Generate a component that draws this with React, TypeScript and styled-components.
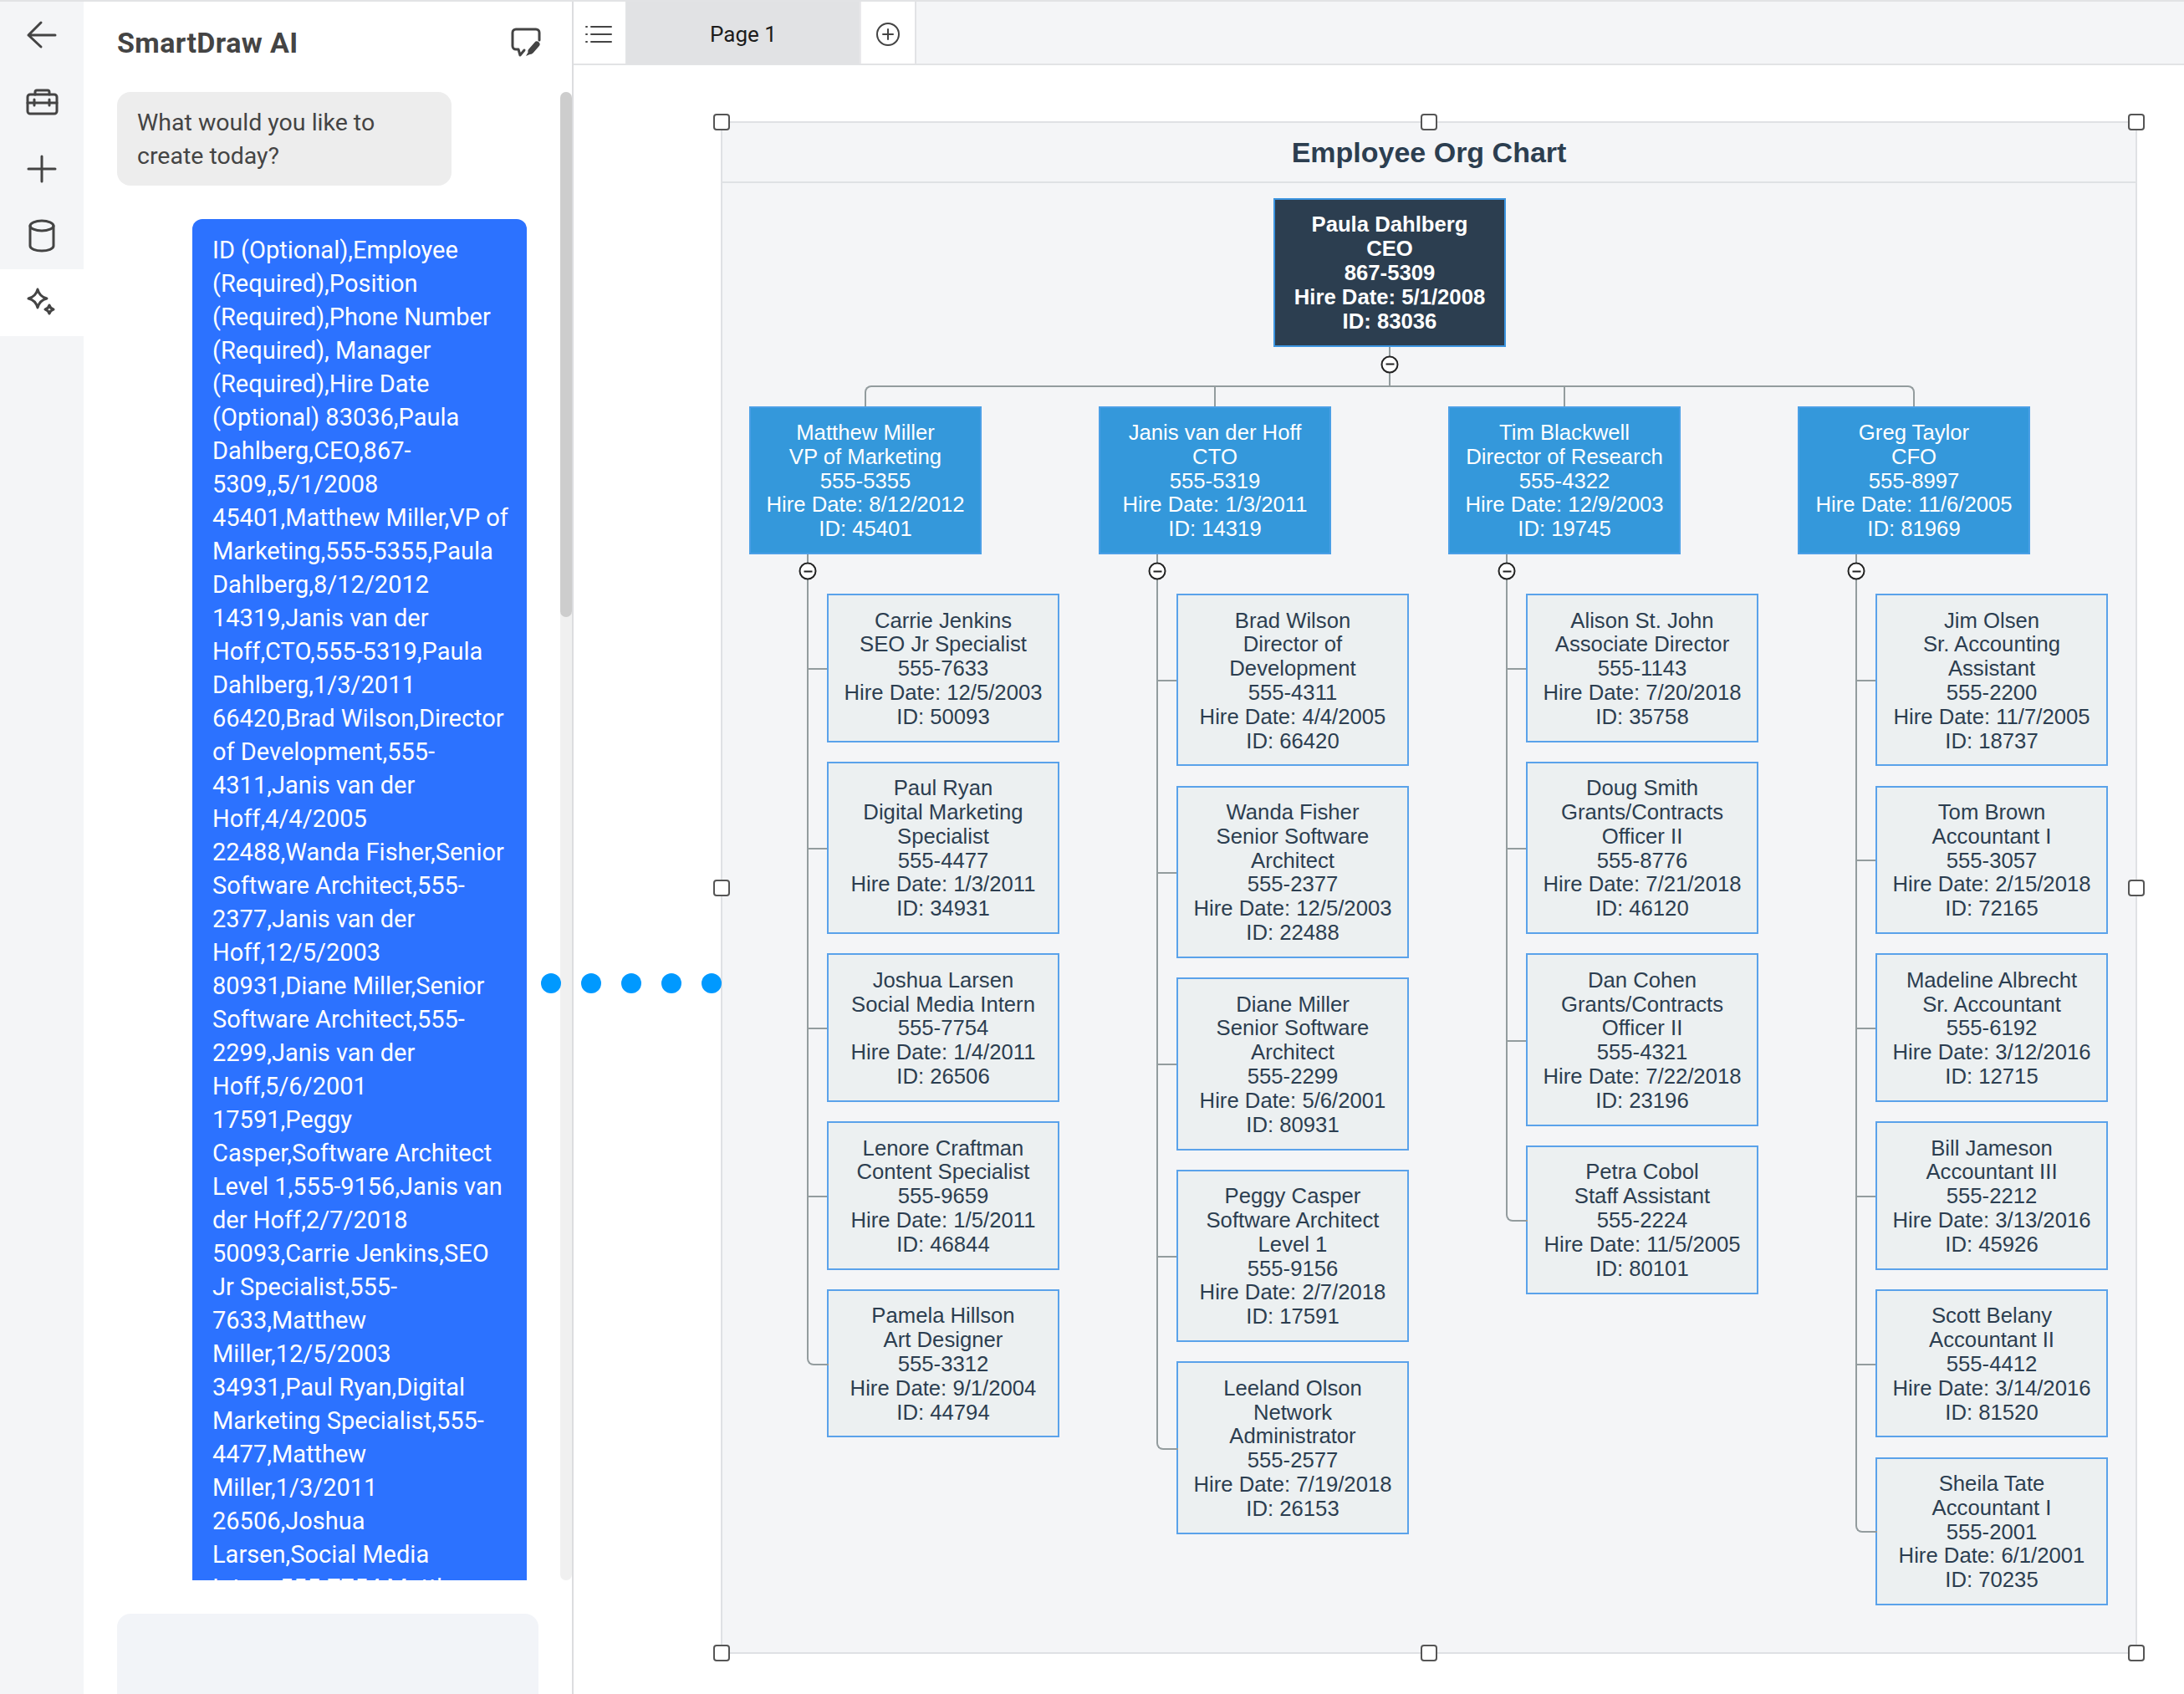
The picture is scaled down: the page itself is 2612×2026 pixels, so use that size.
import React from 'react';
import styled, { createGlobalStyle } from 'styled-components';

const GlobalStyle = createGlobalStyle`
  html, body {
    margin: 0;
    padding: 0;
    background: #fff;
  }
  * {
    box-sizing: border-box;
  }
`;

const PANEL_FONT = `Roboto, "Noto Sans", sans-serif`;
const CHART_FONT = `"Liberation Sans", Arial, sans-serif`;

const Page = styled.div`
  position: relative;
  display: flex;
  width: 2612px;
  height: 2026px;
  overflow: hidden;
  border-top: 2px solid #e2e3e5;
  font-family: ${PANEL_FONT};
  color: #444;
`;

/* left icon rail */
const Rail = styled.nav`
  flex: none;
  display: flex;
  flex-direction: column;
  width: 100px;
  background: #f4f5f7;
`;

const RailItem = styled.div<{ $active?: boolean }>`
  display: flex;
  align-items: center;
  justify-content: center;
  height: 80px;
  background: ${(p) => (p.$active ? '#fff' : 'transparent')};
`;

const Icon = styled.svg`
  display: block;
  fill: none;
  stroke: #444;
  stroke-width: 3;
  stroke-linecap: round;
  stroke-linejoin: round;
`;

/* chat panel */
const Panel = styled.aside`
  flex: none;
  display: flex;
  flex-direction: column;
  width: 586px;
  height: 100%;
  border-right: 2px solid #dcdddf;
  background: #fff;
`;

const PanelHeader = styled.header`
  flex: none;
  display: flex;
  align-items: center;
  justify-content: space-between;
  height: 108px;
  padding: 0 35px 11px 40px;
`;

const PanelTitle = styled.h1`
  margin: 0;
  font-size: 34px;
  font-weight: 700;
  letter-spacing: 0.4px;
  color: #444;
`;

const PanelBody = styled.div`
  flex: none;
  display: flex;
  height: 1780px;
`;

const Messages = styled.div`
  flex: 1;
  display: flex;
  flex-direction: column;
  align-items: flex-start;
  gap: 40px;
  padding-left: 40px;
  overflow: hidden;
`;

const Bubble = styled.div<{ $user?: boolean }>`
  flex: none;
  width: 400px;
  margin-left: ${(p) => (p.$user ? '90px' : '0')};
  padding: 17px 20px 15px 24px;
  border-radius: ${(p) => (p.$user ? '12px' : '16px')};
  background: ${(p) => (p.$user ? '#2c72ff' : '#ededed')};
  color: ${(p) => (p.$user ? '#fff' : '#444')};
  font-size: ${(p) => (p.$user ? '29px' : '28.5px')};
  line-height: 40px;
  white-space: nowrap;
`;

const ScrollTrack = styled.div`
  flex: none;
  width: 14px;
  height: 100%;
  border-radius: 7px;
  background: #f0f0f0;
`;

const ScrollThumb = styled.div`
  height: 628px;
  border-radius: 7px;
  background: #cdcdcd;
`;

const Composer = styled.div`
  flex: none;
  width: 504px;
  height: 100px;
  margin: 40px 0 0 40px;
  border-radius: 16px 16px 0 0;
  background: #f2f4f8;
`;

/* page tabs + canvas */
const Main = styled.main`
  flex: 1;
  display: flex;
  flex-direction: column;
  min-width: 0;
`;

const TabBar = styled.div`
  flex: none;
  display: flex;
  height: 76px;
  border-bottom: 2px solid #e2e3e5;
  background: #f4f5f7;
`;

const TabButton = styled.div<{ $width: number }>`
  display: flex;
  align-items: center;
  justify-content: center;
  width: ${(p) => p.$width}px;
  padding-top: 3px;
  border-right: 2px solid #e2e3e5;
  background: #fff;
`;

const ListButton = styled(TabButton)`
  padding-right: 3px;
`;

const PageTab = styled.div`
  display: flex;
  align-items: center;
  justify-content: center;
  width: 280px;
  padding-top: 3px;
  border-right: 2px solid #e9e9eb;
  background: #e1e2e4;
  color: #1c1c1c;
  font-size: 26px;
`;

const Canvas = styled.div`
  flex: 1;
  padding: 67px 0 0 176px;
  background: #fff;
`;

const ChartFrame = styled.section`
  position: relative;
  width: 1694px;
  height: 1833px;
  border: 2px solid #dfe1e4;
  background: #f4f5f7;
  font-family: ${CHART_FONT};
`;

// percentages run over the frame's outer edge, so handles sit on the border line
const Handle = styled.span<{ $x: number; $y: number }>`
  position: absolute;
  left: calc(-1px + (100% + 2px) * ${(p) => p.$x / 100});
  top: calc(-1px + (100% + 2px) * ${(p) => p.$y / 100});
  z-index: 3;
  width: 20px;
  height: 20px;
  border: 2px solid #555;
  border-radius: 4px;
  background: #fff;
  transform: translate(-50%, -50%);
`;

const ChartTitle = styled.h2`
  display: flex;
  align-items: center;
  justify-content: center;
  height: 72px;
  margin: 0;
  padding-top: 1px;
  border-bottom: 2px solid #dfe1e4;
  color: #2c3e50;
  font-size: 34px;
  font-weight: 700;
`;

const Tree = styled.div`
  padding: 18px 0 0 32px;
`;

const RootRow = styled.div`
  position: relative;
  display: flex;
  flex-direction: column;
  align-items: center;
  width: 1532px;
`;

const Stem = styled.div`
  position: relative;
  width: 2px;
  height: 46px;
  background: #939c9e;
`;

const Bus = styled.div`
  position: relative;
  width: 1256px;
  height: 25px;
  margin-left: 138px;
  border: 2px solid #939c9e;
  border-bottom: 0;
  border-radius: 8px 8px 0 0;

  &::before,
  &::after {
    content: '';
    position: absolute;
    top: 0;
    bottom: 0;
    width: 2px;
    background: #939c9e;
  }
  &::before {
    left: 416px;
  }
  &::after {
    left: 834px;
  }
`;

const Columns = styled.div`
  display: flex;
  gap: 48px;
`;

const Column = styled.div`
  display: flex;
  flex-direction: column;
  width: 370px;
`;

const Node = styled.div<{ $kind: 'root' | 'head' | 'leaf' }>`
  position: relative;
  display: flex;
  flex: none;
  flex-direction: column;
  align-items: center;
  justify-content: center;
  width: 278px;
  padding: 15.4px 4px 14.2px;
  border: 2px solid ${(p) => (p.$kind === 'leaf' ? '#5aa2ea' : p.$kind === 'root' ? '#3d95e0' : '#4a9fe6')};
  background: ${(p) => (p.$kind === 'root' ? '#2c3e50' : p.$kind === 'head' ? '#3498db' : '#ecf0f1')};
  color: ${(p) => (p.$kind === 'leaf' ? '#2c3e50' : '#fff')};
  font-size: 25.7px;
  font-weight: ${(p) => (p.$kind === 'root' ? 700 : 400)};
  line-height: 28.8px;
  text-align: center;
  white-space: nowrap;
`;

const Collapse = styled.span<{ $left: string; $top: string }>`
  position: absolute;
  left: ${(p) => p.$left};
  top: ${(p) => p.$top};
  z-index: 2;
  width: 21px;
  height: 21px;
  border: 2px solid #222;
  border-radius: 50%;
  background: #fff;
  transform: translate(-50%, -50%);

  &::after {
    content: '';
    position: absolute;
    left: 3.5px;
    top: 7.5px;
    width: 10px;
    height: 2px;
    background: #222;
  }
`;

const Reports = styled.div`
  display: flex;
  flex-direction: column;
  gap: 23.2px;
  margin: 47px 0 0 93px;
`;

const Leaf = styled(Node)`
  &::before {
    content: '';
    position: absolute;
    left: -26px;
    top: 50%;
    width: 24px;
    height: 2px;
    background: #939c9e;
  }
  &::after {
    content: '';
    position: absolute;
    left: -26px;
    top: -26px;
    bottom: -2px;
    width: 2px;
    background: #939c9e;
  }
  &:first-child::after {
    top: -49px;
  }
  &:last-child::before {
    display: none;
  }
  &:last-child::after {
    bottom: calc(50% - 2px);
    width: 24px;
    border-left: 2px solid #939c9e;
    border-bottom: 2px solid #939c9e;
    border-bottom-left-radius: 8px;
    background: transparent;
  }
`;

const Connector = styled.div`
  position: absolute;
  left: 647px;
  top: 1162px;
  z-index: 5;
  display: flex;
  gap: 24px;
`;

const Dot = styled.span`
  width: 24px;
  height: 24px;
  border-radius: 50%;
  background: #0099ff;
`;

const promptLines = [
  'ID (Optional),Employee',
  '(Required),Position',
  '(Required),Phone Number',
  '(Required), Manager',
  '(Required),Hire Date',
  '(Optional) 83036,Paula',
  'Dahlberg,CEO,867-',
  '5309,,5/1/2008',
  '45401,Matthew Miller,VP of',
  'Marketing,555-5355,Paula',
  'Dahlberg,8/12/2012',
  '14319,Janis van der',
  'Hoff,CTO,555-5319,Paula',
  'Dahlberg,1/3/2011',
  '66420,Brad Wilson,Director',
  'of Development,555-',
  '4311,Janis van der',
  'Hoff,4/4/2005',
  '22488,Wanda Fisher,Senior',
  'Software Architect,555-',
  '2377,Janis van der',
  'Hoff,12/5/2003',
  '80931,Diane Miller,Senior',
  'Software Architect,555-',
  '2299,Janis van der',
  'Hoff,5/6/2001',
  '17591,Peggy',
  'Casper,Software Architect',
  'Level 1,555-9156,Janis van',
  'der Hoff,2/7/2018',
  '50093,Carrie Jenkins,SEO',
  'Jr Specialist,555-',
  '7633,Matthew',
  'Miller,12/5/2003',
  '34931,Paul Ryan,Digital',
  'Marketing Specialist,555-',
  '4477,Matthew',
  'Miller,1/3/2011',
  '26506,Joshua',
  'Larsen,Social Media',
  'Intern,555-7754,Matthew',
];

type Person = string[];

const org: { head: Person; reports: Person[] }[] = [
  {
    head: ['Matthew Miller', 'VP of Marketing', '555-5355', 'Hire Date: 8/12/2012', 'ID: 45401'],
    reports: [
      ['Carrie Jenkins', 'SEO Jr Specialist', '555-7633', 'Hire Date: 12/5/2003', 'ID: 50093'],
      ['Paul Ryan', 'Digital Marketing', 'Specialist', '555-4477', 'Hire Date: 1/3/2011', 'ID: 34931'],
      ['Joshua Larsen', 'Social Media Intern', '555-7754', 'Hire Date: 1/4/2011', 'ID: 26506'],
      ['Lenore Craftman', 'Content Specialist', '555-9659', 'Hire Date: 1/5/2011', 'ID: 46844'],
      ['Pamela Hillson', 'Art Designer', '555-3312', 'Hire Date: 9/1/2004', 'ID: 44794'],
    ],
  },
  {
    head: ['Janis van der Hoff', 'CTO', '555-5319', 'Hire Date: 1/3/2011', 'ID: 14319'],
    reports: [
      ['Brad Wilson', 'Director of', 'Development', '555-4311', 'Hire Date: 4/4/2005', 'ID: 66420'],
      ['Wanda Fisher', 'Senior Software', 'Architect', '555-2377', 'Hire Date: 12/5/2003', 'ID: 22488'],
      ['Diane Miller', 'Senior Software', 'Architect', '555-2299', 'Hire Date: 5/6/2001', 'ID: 80931'],
      ['Peggy Casper', 'Software Architect', 'Level 1', '555-9156', 'Hire Date: 2/7/2018', 'ID: 17591'],
      ['Leeland Olson', 'Network', 'Administrator', '555-2577', 'Hire Date: 7/19/2018', 'ID: 26153'],
    ],
  },
  {
    head: ['Tim Blackwell', 'Director of Research', '555-4322', 'Hire Date: 12/9/2003', 'ID: 19745'],
    reports: [
      ['Alison St. John', 'Associate Director', '555-1143', 'Hire Date: 7/20/2018', 'ID: 35758'],
      ['Doug Smith', 'Grants/Contracts', 'Officer II', '555-8776', 'Hire Date: 7/21/2018', 'ID: 46120'],
      ['Dan Cohen', 'Grants/Contracts', 'Officer II', '555-4321', 'Hire Date: 7/22/2018', 'ID: 23196'],
      ['Petra Cobol', 'Staff Assistant', '555-2224', 'Hire Date: 11/5/2005', 'ID: 80101'],
    ],
  },
  {
    head: ['Greg Taylor', 'CFO', '555-8997', 'Hire Date: 11/6/2005', 'ID: 81969'],
    reports: [
      ['Jim Olsen', 'Sr. Accounting', 'Assistant', '555-2200', 'Hire Date: 11/7/2005', 'ID: 18737'],
      ['Tom Brown', 'Accountant I', '555-3057', 'Hire Date: 2/15/2018', 'ID: 72165'],
      ['Madeline Albrecht', 'Sr. Accountant', '555-6192', 'Hire Date: 3/12/2016', 'ID: 12715'],
      ['Bill Jameson', 'Accountant III', '555-2212', 'Hire Date: 3/13/2016', 'ID: 45926'],
      ['Scott Belany', 'Accountant II', '555-4412', 'Hire Date: 3/14/2016', 'ID: 81520'],
      ['Sheila Tate', 'Accountant I', '555-2001', 'Hire Date: 6/1/2001', 'ID: 70235'],
    ],
  },
];

const handles = [
  [0, 0], [50, 0], [100, 0],
  [0, 50], [100, 50],
  [0, 100], [50, 100], [100, 100],
];

const lines = (person: Person) => person.map((line) => <div key={line}>{line}</div>);

const App: React.FC = () => {
  return (
    <Page>
      <GlobalStyle />
      <Rail>
        <RailItem>
          <Icon width="48" height="48" viewBox="0 0 48 48">
            <path d="M8 24H40M23 9L8 24L23 38" />
          </Icon>
        </RailItem>
        <RailItem>
          <Icon width="48" height="48" viewBox="0 0 48 48">
            <rect x="7" y="15" width="35" height="23" rx="3" />
            <path d="M16 15v-3a2 2 0 0 1 2-2h13a2 2 0 0 1 2 2v3M7 25H42M15 21v7M33 21v7" />
          </Icon>
        </RailItem>
        <RailItem>
          <Icon width="48" height="48" viewBox="0 0 48 48">
            <path d="M24 9V39M8 24H40" />
          </Icon>
        </RailItem>
        <RailItem>
          <Icon width="48" height="48" viewBox="0 0 48 48">
            <ellipse cx="24" cy="12" rx="14" ry="6" />
            <path d="M10 12V36C10 39.5 16.5 42 24 42S38 39.5 38 36V12" />
          </Icon>
        </RailItem>
        <RailItem $active>
          <Icon width="48" height="48" viewBox="0 0 48 48">
            <path d="M19 8C20.5 14 24 17.5 30 19C24 20.5 20.5 24 19 30C17.5 24 14 20.5 8 19C14 17.5 17.5 14 19 8Z" />
            <path d="M33 27C33.8 30 35 31.2 38 32C35 32.8 33.8 34 33 37C32.2 34 31 32.8 28 32C31 31.2 32.2 30 33 27Z" />
          </Icon>
        </RailItem>
      </Rail>

      <Panel>
        <PanelHeader>
          <PanelTitle>SmartDraw AI</PanelTitle>
          <Icon width="40" height="40" viewBox="0 0 40 40">
            <path d="M36 17V8a4 4 0 0 0-4-4H8a4 4 0 0 0-4 4V24a4 4 0 0 0 4 4h3l2 7l5-6" />
            <path d="M33 22L26 30" style={{ strokeWidth: 7 }} />
            <path d="M24 29L20 36L27 33Z" fill="#444" stroke="none" />
          </Icon>
        </PanelHeader>
        <PanelBody>
          <Messages>
            <Bubble>
              What would you like to
              <br />
              create today?
            </Bubble>
            <Bubble $user>{lines(promptLines)}</Bubble>
          </Messages>
          <ScrollTrack>
            <ScrollThumb />
          </ScrollTrack>
        </PanelBody>
        <Composer />
      </Panel>

      <Main>
        <TabBar>
          <ListButton $width={64}>
            <Icon width="36" height="24" viewBox="0 0 36 24" style={{ strokeWidth: 2 }}>
              <path d="M9 3H33M9 12H33M9 21H33M3 3H4M3 12H4M3 21H4" />
            </Icon>
          </ListButton>
          <PageTab>Page 1</PageTab>
          <TabButton $width={66}>
            <Icon width="30" height="30" viewBox="0 0 30 30" style={{ strokeWidth: 2 }}>
              <circle cx="15" cy="15" r="13" />
              <path d="M15 9V21M9 15H21" />
            </Icon>
          </TabButton>
        </TabBar>
        <Canvas>
          <ChartFrame>
            {handles.map(([x, y]) => (
              <Handle key={`${x}-${y}`} $x={x} $y={y} />
            ))}
            <ChartTitle>Employee Org Chart</ChartTitle>
            <Tree>
              <RootRow>
                <Node $kind="root">
                  {lines(['Paula Dahlberg', 'CEO', '867-5309', 'Hire Date: 5/1/2008', 'ID: 83036'])}
                </Node>
                <Stem>
                  <Collapse $left="50%" $top="21px" />
                </Stem>
              </RootRow>
              <Bus />
              <Columns>
                {org.map((group) => (
                  <Column key={group.head[0]}>
                    <Node $kind="head">
                      {lines(group.head)}
                      <Collapse $left="68px" $top="calc(100% + 22px)" />
                    </Node>
                    <Reports>
                      {group.reports.map((person) => (
                        <Leaf key={person[0]} $kind="leaf">
                          {lines(person)}
                        </Leaf>
                      ))}
                    </Reports>
                  </Column>
                ))}
              </Columns>
            </Tree>
          </ChartFrame>
        </Canvas>
      </Main>

      <Connector>
        {[0, 1, 2, 3, 4].map((i) => (
          <Dot key={i} />
        ))}
      </Connector>
    </Page>
  );
};

export default App;
